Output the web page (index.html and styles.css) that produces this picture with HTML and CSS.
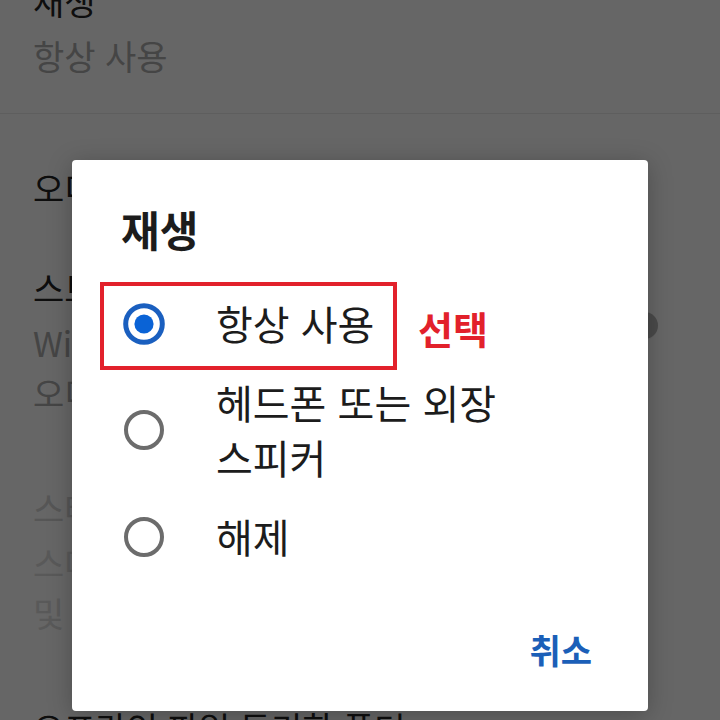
FILE: index.html
```html
<!DOCTYPE html>
<html lang="ko">
<head>
<meta charset="utf-8">
<title>재생</title>
<link rel="stylesheet" href="styles.css">
</head>
<body>
<div class="screen">
  <div class="settings">
    <div class="item item-first item-divided">
      <div class="item-text">
        <div class="item-title">재생</div>
        <div class="item-sub">항상 사용</div>
      </div>
    </div>
    <div class="category">오디오 효과</div>
    <div class="item">
      <div class="item-text">
        <div class="item-title">스트리밍 품질</div>
        <div class="item-sub">Wi-Fi 연결 시 고음질로 재생<br>오디오 품질 자동 조정</div>
      </div>
      <div class="toggle"><span class="toggle-knob"></span></div>
    </div>
    <div class="item item-disabled">
      <div class="item-text">
        <div class="item-title">스테레오 믹스</div>
        <div class="item-sub">스마트 기기 연결 시 볼륨 균형 조정<br>및 음장 효과를 적용합니다</div>
      </div>
    </div>
    <div class="item">
      <div class="item-text">
        <div class="item-title">오프라인 파일 동기화 폴더</div>
      </div>
    </div>
  </div>

  <div class="scrim"></div>

  <div class="dialog">
    <div class="dialog-title">재생</div>
    <div class="options">
      <div class="option">
        <svg class="radio" viewBox="0 0 42 42" width="42" height="42"><circle cx="21" cy="21" r="18.3" fill="none" stroke="#1a5fbf" stroke-width="5"/><circle cx="21" cy="21" r="9.6" fill="#0a63d6"/></svg>
        <span class="option-label">항상 사용</span>
        <span class="mark-box"></span>
        <span class="mark-label">선택</span>
      </div>
      <div class="option">
        <svg class="radio" viewBox="0 0 42 42" width="42" height="42"><circle cx="21" cy="21" r="18" fill="none" stroke="#6c6c6c" stroke-width="4"/></svg>
        <span class="option-label">헤드폰 또는 외장<br>스피커</span>
      </div>
      <div class="option">
        <svg class="radio" viewBox="0 0 42 42" width="42" height="42"><circle cx="21" cy="21" r="18" fill="none" stroke="#6c6c6c" stroke-width="4"/></svg>
        <span class="option-label">해제</span>
      </div>
    </div>
    <div class="dialog-actions">
      <span class="btn-text">취소</span>
    </div>
  </div>
</div>
</body>
</html>
```

FILE: styles.css
```css
* { box-sizing: border-box; }

html, body {
  margin: 0;
  padding: 0;
}

body {
  width: 720px;
  height: 720px;
  overflow: hidden;
  font-family: "Noto Sans CJK KR", "Noto Sans", sans-serif;
  background: #ffffff;
}

.screen {
  position: relative;
  width: 720px;
  height: 720px;
  overflow: hidden;
  background: #ffffff;
}

.settings {
  display: flex;
  flex-direction: column;
}

.item {
  display: flex;
  align-items: center;
  padding: 33px 62px 32px 33px;
}

.item-first {
  margin-top: -57px;
}

.item-divided {
  border-bottom: 1px solid #ececec;
}

.item-text {
  flex: 1;
  display: flex;
  flex-direction: column;
}

.item-title {
  font-size: 34px;
  line-height: 50px;
  color: #242424;
  margin-bottom: 5px;
  white-space: nowrap;
}

.item-sub {
  font-size: 34px;
  line-height: 50px;
  color: #acacac;
  white-space: nowrap;
}

.item-disabled .item-title { color: #d6d6d6; }
.item-disabled .item-sub { color: #dedede; }

.category {
  padding: 49px 62px 17px 33px;
  font-size: 34px;
  line-height: 50px;
  color: #242424;
}

.toggle {
  width: 56px;
  height: 30px;
  border-radius: 15px;
  background: #f7f7f7;
  display: flex;
  justify-content: flex-end;
  align-items: center;
  margin-bottom: 30px;
  flex-shrink: 0;
}

.toggle-knob {
  width: 27px;
  height: 27px;
  border-radius: 50%;
  background: #b8b8b8;
}

.scrim {
  position: absolute;
  inset: 0;
  background: rgba(0, 0, 0, 0.6);
}

.dialog {
  position: absolute;
  left: 72px;
  top: 160px;
  width: 576px;
  height: 551px;
  background: #ffffff;
  border-radius: 4px;
  box-shadow: 0 4px 24px rgba(0, 0, 0, 0.25);
  padding: 44px 0 41px 0;
  display: flex;
  flex-direction: column;
}

.dialog-title {
  padding-left: 49px;
  font-size: 42px;
  line-height: 50px;
  font-weight: 700;
  color: #1c1c1c;
  margin-bottom: 30px;
}

.options {
  display: flex;
  flex-direction: column;
}

.option {
  position: relative;
  display: flex;
  align-items: center;
  padding: 12px 0 12px 51px;
}

.radio {
  flex-shrink: 0;
  display: block;
}

.option-label {
  margin-left: 51px;
  font-size: 40px;
  line-height: 55px;
  color: #1c1c1c;
}

.mark-box {
  position: absolute;
  left: 28px;
  top: -2px;
  width: 297px;
  height: 88px;
  border: 4px solid #e2212b;
}

.mark-label {
  position: absolute;
  left: 346px;
  top: 24px;
  font-size: 38px;
  line-height: 40px;
  font-weight: 700;
  color: #e2212b;
}

.dialog-actions {
  margin-top: auto;
  display: flex;
  justify-content: flex-end;
  padding-right: 56px;
}

.btn-text {
  font-size: 34px;
  line-height: 40px;
  font-weight: 700;
  color: #1b5fb8;
}
```
